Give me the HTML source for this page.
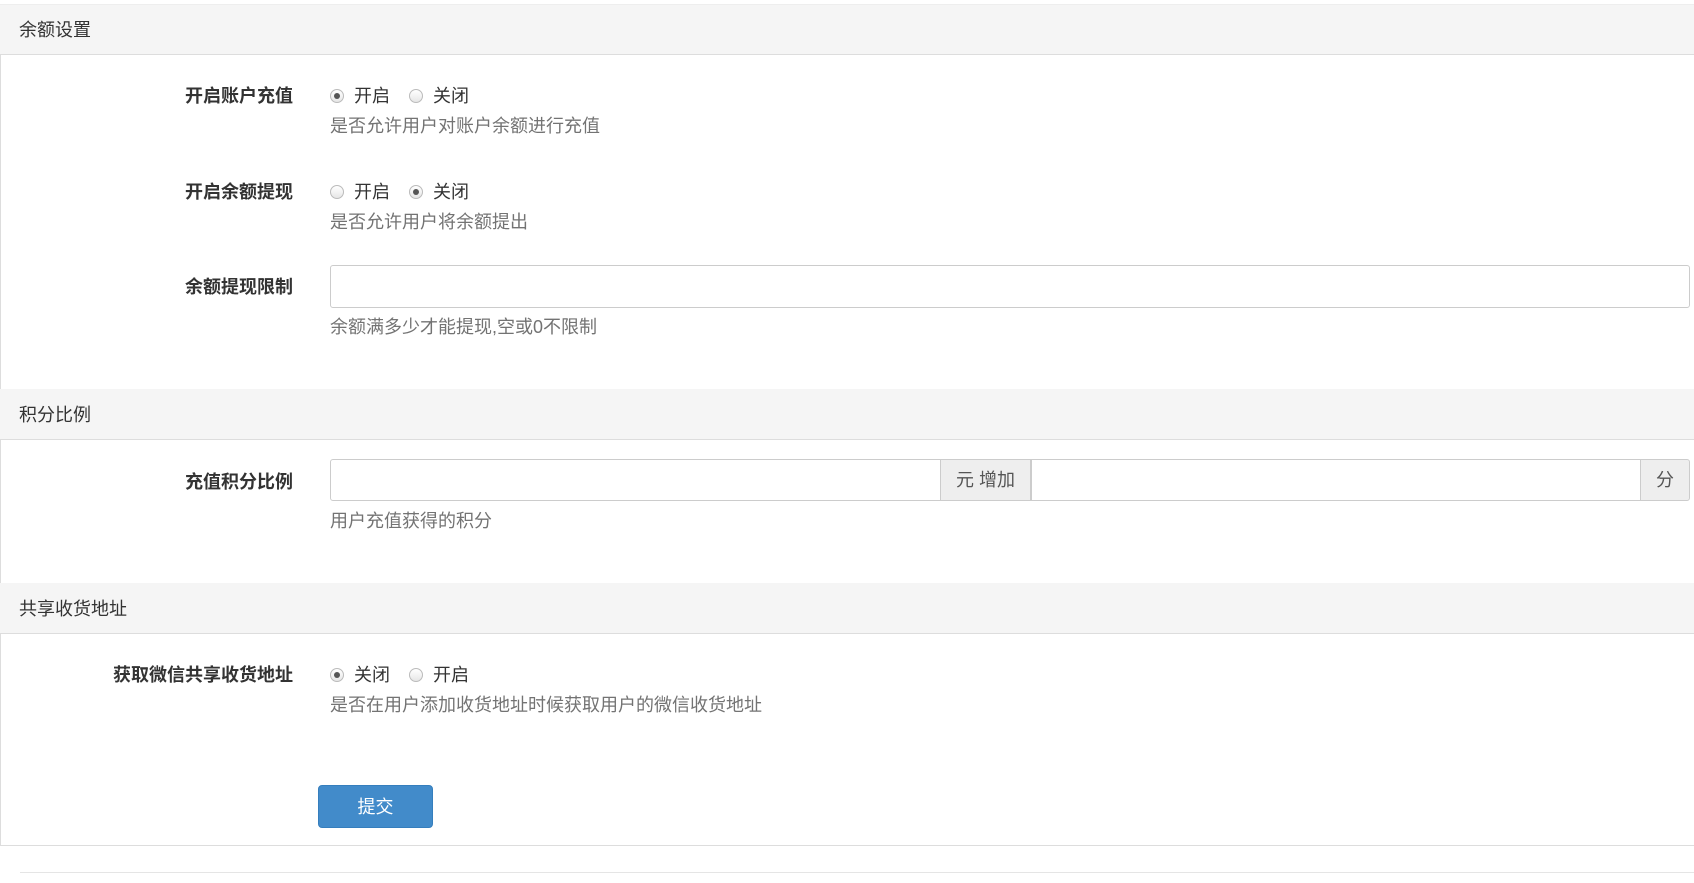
<!DOCTYPE html>
<html><head><meta charset="utf-8"><style>
*{margin:0;padding:0;box-sizing:border-box}
body{width:1694px;height:883px;background:#fff;font-family:"Liberation Sans","Noto Sans CJK SC",sans-serif;font-size:18px;color:#333;position:relative;overflow:hidden}
.a{position:absolute;white-space:nowrap;line-height:20px;margin-top:1px}
.hd{position:absolute;left:0;width:1694px;background:#f5f5f5;border-bottom:1px solid #ddd;border-top:1px solid #eee}
.lbl{position:absolute;right:1401px;font-weight:bold;line-height:20px;white-space:nowrap;margin-top:1px}
.help{color:#737373}
.r{position:absolute;width:14px;height:14px;border-radius:50%;border:1px solid #bbb;background:linear-gradient(#fff,#e6e6e6);margin-top:1px}
.r.on::after{content:"";position:absolute;left:3px;top:3px;width:6px;height:6px;border-radius:50%;background:#555}
.inp{position:absolute;border:1px solid #ccc;background:#fff;border-radius:3px}
.add{position:absolute;border:1px solid #ccc;background:#eee;color:#555;text-align:center}
</style></head><body>
<div style="position:absolute;left:0;top:54px;width:1px;height:792px;background:#ddd"></div>
<div style="position:absolute;left:0;top:845px;width:1694px;height:1px;background:#ddd"></div>
<div style="position:absolute;left:20px;top:872px;width:1674px;height:1px;background:#e5e5e5"></div>

<div class="hd" style="top:4px;height:51px"></div>
<div class="a" style="left:19px;top:19px">余额设置</div>

<div class="lbl" style="top:85px">开启账户充值</div>
<div class="r on" style="left:330px;top:88px"></div><div class="a" style="left:354px;top:85px">开启</div>
<div class="r" style="left:409px;top:88px"></div><div class="a" style="left:433px;top:85px">关闭</div>
<div class="a help" style="left:330px;top:115px">是否允许用户对账户余额进行充值</div>

<div class="lbl" style="top:181px">开启余额提现</div>
<div class="r" style="left:330px;top:184px"></div><div class="a" style="left:354px;top:181px">开启</div>
<div class="r on" style="left:409px;top:184px"></div><div class="a" style="left:433px;top:181px">关闭</div>
<div class="a help" style="left:330px;top:211px">是否允许用户将余额提出</div>

<div class="lbl" style="top:276px">余额提现限制</div>
<div class="inp" style="left:330px;top:265px;width:1360px;height:43px"></div>
<div class="a help" style="left:330px;top:316px">余额满多少才能提现,空或0不限制</div>

<div class="hd" style="top:389px;height:51px;border-top:none"></div>
<div class="a" style="left:19px;top:404px">积分比例</div>

<div class="lbl" style="top:471px">充值积分比例</div>
<div class="inp" style="left:330px;top:459px;width:611px;height:42px;border-radius:3px 0 0 3px"></div>
<div class="add" style="left:940px;top:459px;width:91px;height:42px;line-height:40px">元 增加</div>
<div class="inp" style="left:1031px;top:459px;width:610px;height:42px;border-radius:0"></div>
<div class="add" style="left:1640px;top:459px;width:50px;height:42px;line-height:40px;border-radius:0 3px 3px 0">分</div>
<div class="a help" style="left:330px;top:510px">用户充值获得的积分</div>

<div class="hd" style="top:583px;height:51px;border-top:none"></div>
<div class="a" style="left:19px;top:598px">共享收货地址</div>

<div class="lbl" style="top:664px">获取微信共享收货地址</div>
<div class="r on" style="left:330px;top:667px"></div><div class="a" style="left:354px;top:664px">关闭</div>
<div class="r" style="left:409px;top:667px"></div><div class="a" style="left:433px;top:664px">开启</div>
<div class="a help" style="left:330px;top:694px">是否在用户添加收货地址时候获取用户的微信收货地址</div>

<div style="position:absolute;left:318px;top:785px;width:115px;height:43px;background:#428bca;border:1px solid #357ebd;border-radius:4px;color:#fff;text-align:center;line-height:43px">提交</div>
</body></html>
